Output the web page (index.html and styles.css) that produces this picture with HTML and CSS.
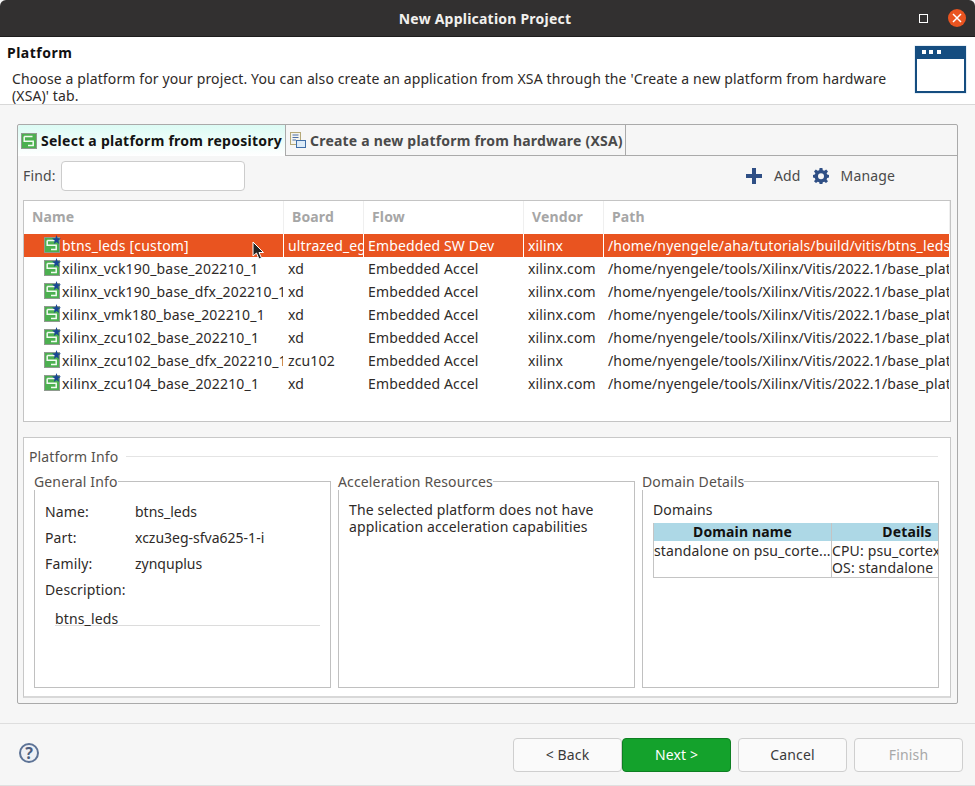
FILE: index.html
```html
<!DOCTYPE html>
<html lang="en">
<head>
<meta charset="utf-8">
<title>New Application Project</title>
<link rel="stylesheet" href="styles.css">
</head>
<body>
<svg class="defs" width="0" height="0" aria-hidden="true">
  <defs>
    <symbol id="repo" viewBox="0 0 16 16">
      <rect x="0.5" y="0.5" width="15" height="15" fill="#4cb050" stroke="#8f9a8f"/>
      <path d="M3.200 3.500H11.500M3.200 3.500V8.200H12.200V12.500H7" fill="none" stroke="#f2fbf2" stroke-width="1.500"/>
    </symbol>
    <symbol id="star" viewBox="0 0 8 8">
      <path d="M4 0L5 2.800L8 3L5.600 4.800L6.400 8L4 6.200L1.600 8L2.400 4.800L0 3L3 2.800Z" fill="#1a4596"/>
    </symbol>
  </defs>
</svg>
<div class="window">
  <header class="titlebar">
    <span class="title">New Application Project</span>
    <span class="maximize"></span>
    <span class="close">
      <svg width="10" height="10" viewBox="0 0 10 10"><path d="M1 1L9 9M9 1L1 9" stroke="#fff" stroke-width="1.500"/></svg>
    </span>
  </header>

  <section class="banner">
    <div class="banner-text">
      <h1>Platform</h1>
      <p>Choose a platform for your project. You can also create an application from XSA through the 'Create a new platform from hardware (XSA)' tab.</p>
    </div>
    <svg class="banner-icon" width="53" height="49" viewBox="0 0 53 49">
      <rect x="0.500" y="0.500" width="52" height="48" fill="#cfe0ee"/>
      <rect x="1" y="1" width="51" height="47" fill="#154d80"/>
      <rect x="3" y="14" width="47" height="32" fill="#fff"/>
      <rect x="8" y="5" width="4" height="4" fill="#fff"/>
      <rect x="15" y="5" width="4" height="4" fill="#fff"/>
      <rect x="23" y="5" width="4" height="4" fill="#fff"/>
    </svg>
  </section>

  <main class="content">
    <div class="folder">
      <div class="tabs">
        <div class="tab tab-active">
          <svg class="tab-icon" width="16" height="16"><use href="#repo"/></svg>
          <span>Select a platform from repository</span>
        </div>
        <div class="tab tab-idle">
          <svg class="tab-icon" width="16" height="16" viewBox="0 0 16 16">
            <rect x="0.500" y="0.500" width="10" height="12" fill="#f4f4ee" stroke="#b5a878"/>
            <path d="M2.500 3H8.500M2.500 5.500H8.500M2.500 8H6" stroke="#4d6fa8"/>
            <rect x="6.500" y="8.500" width="9" height="7" fill="#dcebf8" stroke="#3f6ea8"/>
          </svg>
          <span>Create a new platform from hardware (XSA)</span>
        </div>
        <div class="tab-rest"></div>
      </div>

      <div class="folder-body">
        <div class="toolbar">
          <label class="find-label" for="find">Find:</label>
          <input class="find-input" id="find" type="text">
          <div class="actions">
            <svg width="16" height="16" viewBox="0 0 16 16"><path d="M6 0H10V6H16V10H10V16H6V10H0V6H6Z" fill="#2f4f85"/></svg>
            <span class="action-label add-label">Add</span>
            <svg width="16" height="16" viewBox="0 0 16 16">
              <path fill="#2f4f85" fill-rule="evenodd" d="M6.600 0H9.400L9.800 2.200L11.300 2.800L13.200 1.500L15 3.400L13.600 5.200L14.200 6.600L16 7V9.600L14.200 10L13.600 11.400L15 13.200L13 15L11.300 13.700L9.800 14.200L9.400 16H6.600L6.200 14.200L4.700 13.700L3 15L1 13.200L2.400 11.400L1.800 10L0 9.600V7L1.800 6.600L2.400 5.200L1 3.400L2.800 1.500L4.700 2.800L6.200 2.200ZM8 5.200A3 3 0 1 0 8 11.200A3 3 0 1 0 8 5.200Z"/>
            </svg>
            <span class="action-label">Manage</span>
          </div>
        </div>

        <div class="table">
          <div class="row row-head">
            <div class="cell">Name</div><div class="cell">Board</div><div class="cell">Flow</div><div class="cell">Vendor</div><div class="cell">Path</div>
          </div>
          <div class="row row-selected">
            <div class="cell cell-name"><span class="ico"><svg class="ico-box" width="16" height="16"><use href="#repo"/></svg><svg class="ico-star" width="9" height="9"><use href="#star"/></svg></span><span>btns_leds [custom]</span></div>
            <div class="cell">ultrazed_eg</div><div class="cell">Embedded SW Dev</div><div class="cell">xilinx</div><div class="cell">/home/nyengele/aha/tutorials/build/vitis/btns_leds/export/btns_leds.xpfm</div>
          </div>
          <div class="row">
            <div class="cell cell-name"><span class="ico"><svg class="ico-box" width="16" height="16"><use href="#repo"/></svg><svg class="ico-star" width="9" height="9"><use href="#star"/></svg></span><span>xilinx_vck190_base_202210_1</span></div>
            <div class="cell">xd</div><div class="cell">Embedded Accel</div><div class="cell">xilinx.com</div><div class="cell">/home/nyengele/tools/Xilinx/Vitis/2022.1/base_platforms/xilinx</div>
          </div>
          <div class="row">
            <div class="cell cell-name"><span class="ico"><svg class="ico-box" width="16" height="16"><use href="#repo"/></svg><svg class="ico-star" width="9" height="9"><use href="#star"/></svg></span><span>xilinx_vck190_base_dfx_202210_1</span></div>
            <div class="cell">xd</div><div class="cell">Embedded Accel</div><div class="cell">xilinx.com</div><div class="cell">/home/nyengele/tools/Xilinx/Vitis/2022.1/base_platforms/xilinx</div>
          </div>
          <div class="row">
            <div class="cell cell-name"><span class="ico"><svg class="ico-box" width="16" height="16"><use href="#repo"/></svg><svg class="ico-star" width="9" height="9"><use href="#star"/></svg></span><span>xilinx_vmk180_base_202210_1</span></div>
            <div class="cell">xd</div><div class="cell">Embedded Accel</div><div class="cell">xilinx.com</div><div class="cell">/home/nyengele/tools/Xilinx/Vitis/2022.1/base_platforms/xilinx</div>
          </div>
          <div class="row">
            <div class="cell cell-name"><span class="ico"><svg class="ico-box" width="16" height="16"><use href="#repo"/></svg><svg class="ico-star" width="9" height="9"><use href="#star"/></svg></span><span>xilinx_zcu102_base_202210_1</span></div>
            <div class="cell">xd</div><div class="cell">Embedded Accel</div><div class="cell">xilinx.com</div><div class="cell">/home/nyengele/tools/Xilinx/Vitis/2022.1/base_platforms/xilinx</div>
          </div>
          <div class="row">
            <div class="cell cell-name"><span class="ico"><svg class="ico-box" width="16" height="16"><use href="#repo"/></svg><svg class="ico-star" width="9" height="9"><use href="#star"/></svg></span><span>xilinx_zcu102_base_dfx_202210_1</span></div>
            <div class="cell">zcu102</div><div class="cell">Embedded Accel</div><div class="cell">xilinx</div><div class="cell">/home/nyengele/tools/Xilinx/Vitis/2022.1/base_platforms/xilinx</div>
          </div>
          <div class="row">
            <div class="cell cell-name"><span class="ico"><svg class="ico-box" width="16" height="16"><use href="#repo"/></svg><svg class="ico-star" width="9" height="9"><use href="#star"/></svg></span><span>xilinx_zcu104_base_202210_1</span></div>
            <div class="cell">xd</div><div class="cell">Embedded Accel</div><div class="cell">xilinx.com</div><div class="cell">/home/nyengele/tools/Xilinx/Vitis/2022.1/base_platforms/xilinx</div>
          </div>
          <svg class="cursor" width="13" height="19" viewBox="0 0 13 19"><path d="M1 1V15L4.500 12L7 18L9.500 17L7 11.500H11.500Z" fill="#222" stroke="#fff" stroke-width="1"/></svg>
        </div>

        <div class="info">
          <div class="info-head"><span>Platform Info</span><span class="info-rule"></span></div>
          <div class="groups">
            <fieldset class="group">
              <legend>General Info</legend>
              <dl class="facts">
                <dt>Name:</dt><dd>btns_leds</dd>
                <dt>Part:</dt><dd>xczu3eg-sfva625-1-i</dd>
                <dt>Family:</dt><dd>zynquplus</dd>
                <dt>Description:</dt><dd></dd>
              </dl>
              <div class="desc">btns_leds</div>
            </fieldset>
            <fieldset class="group">
              <legend>Acceleration Resources</legend>
              <p class="accel">The selected platform does not have application acceleration capabilities</p>
            </fieldset>
            <fieldset class="group group-domain">
              <legend>Domain Details</legend>
              <div class="domains">Domains</div>
              <div class="dtable">
                <div class="dhead dname">Domain name</div>
                <div class="dhead ddetails">Details</div>
                <div class="dcell dname">standalone on psu_corte...</div>
                <div class="dcell ddetails">CPU: psu_cortexa53_0<br>OS: standalone</div>
              </div>
            </fieldset>
          </div>
        </div>
      </div>
    </div>
  </main>

  <footer class="footer">
    <span class="help">?</span>
    <div class="buttons">
      <button class="btn" type="button">&lt; Back</button>
      <button class="btn btn-primary" type="button">Next &gt;</button>
      <button class="btn btn-gap" type="button">Cancel</button>
      <button class="btn btn-gap btn-disabled" type="button">Finish</button>
    </div>
  </footer>
</div>
</body>
</html>
```

FILE: styles.css
```css
* { box-sizing: border-box; }
html, body { margin: 0; padding: 0; }
body {
  width: 975px;
  height: 786px;
  overflow: hidden;
  background: #f6f6f6;
  font-family: "Noto Sans", "Open Sans", sans-serif;
  font-size: 14px;
  letter-spacing: 0.14px;
  color: #2e2a28;
}
.defs { position: absolute; }
.window { display: flex; flex-direction: column; width: 975px; height: 786px; background: #f6f6f6; border-bottom: 1px solid #e0e0e0; }

.titlebar {
  flex: none;
  position: relative;
  height: 37px;
  display: flex;
  align-items: center;
  justify-content: center;
  background: #323030;
  border-bottom: 1px solid #1e1d1d;
  border-radius: 6px 6px 0 0;
}
.title { color: #f2f0ee; font-weight: 700; font-size: 14px; letter-spacing: 0.22px; margin-right: 5px; }
.maximize { position: absolute; left: 919px; top: 14px; width: 9px; height: 9px; border: 1px solid #fff; }
.close { position: absolute; left: 948px; top: 9px; width: 18px; height: 18px; border-radius: 50%; background: #e95420; display: flex; align-items: center; justify-content: center; }

.banner { flex: none; height: 68px; display: flex; background: #fff; border-bottom: 1px solid #d8d8d8; padding: 0 8px 0 0; }
.banner-text { flex: 1; min-width: 0; }
.banner h1 { margin: 7px 0 0 7px; font-size: 14px; line-height: 17px; font-weight: 700; letter-spacing: 0.5px; color: #111; }
.banner p { margin: 9px 0 0 12px; width: 890px; font-size: 14px; line-height: 17px; letter-spacing: 0.12px; color: #2e2a28; }
.banner-icon { flex: none; margin: 8px 0 0 0; }

.content { flex: none; height: 618px; padding: 19px 17px 0; }
.folder { width: 941px; height: 580px; border: 1px solid #aaa; border-radius: 2px; display: flex; flex-direction: column; }
.tabs { flex: none; height: 31px; display: flex; }
.tab { height: 31px; display: flex; align-items: center; font-weight: 700; font-size: 14px; letter-spacing: 0.26px; white-space: nowrap; }
.tab-active { width: 268px; padding-left: 3px; gap: 4px; color: #141414; background: linear-gradient(#dcfbf4, #fff); border-right: 1px solid #aaa; border-radius: 3px 0 0 0; }
.tab-idle { width: 340px; padding-left: 4px; gap: 4px; letter-spacing: 0.21px; color: #4a4a4a; border-right: 1px solid #aaa; border-bottom: 1px solid #aaa; }
.tab-rest { flex: 1; border-bottom: 1px solid #aaa; }
.tab-icon { flex: none; }

.folder-body { flex: 1; min-height: 0; padding: 0 6px 0 5px; display: flex; flex-direction: column; }
.toolbar { flex: none; height: 44px; display: flex; align-items: center; padding-bottom: 5px; }
.find-label { color: #4a4a4a; width: 38px; }
.find-input { width: 184px; height: 30px; background: #fff; border: 1px solid #ccc; border-radius: 4px; }
.actions { margin-left: auto; display: flex; align-items: center; padding-right: 56px; }
.action-label { color: #4a4a4a; margin-left: 12px; }
.add-label { margin-right: 12px; }

.table { position: relative; flex: none; height: 222px; background: #fff; border: 1px solid #c4c4c4; overflow: hidden; }
.row { display: grid; grid-template-columns: 260px 80px 160px 80px 1fr; height: 23px; align-items: stretch; }
.row-head { height: 33px; color: #a6a6a6; font-weight: 700; }
.row-head .cell { border-right: 1px solid #efefef; display: flex; align-items: center; padding: 0 0 1px 8px; }
.cell { overflow: hidden; white-space: nowrap; padding: 1px 0 0 4px; line-height: 22px; border-right: 1px solid transparent; }
.cell-name { display: flex; padding-left: 20px; gap: 2px; letter-spacing: 0.18px; }
.row-selected { background: #e95420; color: #fff; }
.row-selected .cell { border-right-color: #fff; }
.ico { position: relative; flex: none; width: 16px; height: 19px; }
.ico-box { position: absolute; left: 0; top: 2px; }
.ico-star { position: absolute; left: 8px; top: 0; }
.cursor { position: absolute; left: 228px; top: 40px; }

.info { flex: none; margin-top: 15px; height: 261px; background: #fff; padding: 10px 12px 0 5px; border: 1px solid #c8c8c8; border-bottom: 2px solid #d8d8d8; }
.info-head { display: flex; align-items: center; color: #55504c; height: 16px; gap: 8px; }
.info-rule { flex: 1; height: 1px; background: #e4e4e4; }
.groups { display: flex; gap: 7px; margin-top: 9px; padding-left: 5px; }
.group { flex: none; width: 297px; height: 215px; margin: 0; padding: 0; border: 1px solid #c0c0c0; min-width: 0; overflow: hidden; }
.group legend { padding: 0; margin-left: -1px; color: #55504c; font-size: 14px; line-height: 17px; }
.group-domain { padding-right: 0; }
.facts { display: grid; grid-template-columns: 90px 1fr; grid-auto-rows: 26px; margin: 8px 0 0 10px; align-items: center; }
.facts dt, .facts dd { margin: 0; color: #2e2a28; white-space: nowrap; }
.facts dd { letter-spacing: 0; }
.desc { margin: 7px 10px 0 20px; height: 17px; line-height: 19px; border-bottom: 1px solid #dcdcdc; }
.accel { margin: 11px 0 0 10px; width: 270px; line-height: 17px; }
.domains { margin: 11px 0 0 10px; line-height: 17px; }
.dtable { display: grid; grid-template-columns: 178px 150px; grid-template-rows: 18px 36px; margin: 5px 0 0 10px; width: 285px; overflow: hidden; border-left: 1px solid #c4c4c4; border-bottom: 1px solid #c4c4c4; }
.dhead { background: #add8e6; font-weight: 700; text-align: center; color: #111; line-height: 18px; border-right: 1px solid #c4c4c4; }
.dcell { padding-top: 1px; line-height: 17px; white-space: nowrap; overflow: hidden; border-right: 1px solid #c4c4c4; }
.ddetails { border-right: none; }

.footer { flex: 1; min-height: 0; display: flex; align-items: flex-start; padding: 14px 12px 0 19px; border-top: 1px solid #dedede; }
.help { flex: none; width: 20px; height: 20px; margin-top: 5px; border-radius: 50%; border: 2px solid #5d7396; background: #eef0f5; color: #4c5e7e; font-weight: 700; font-size: 16px; line-height: 16px; text-align: center; letter-spacing: 0; }
.buttons { margin-left: auto; display: flex; }
.btn { width: 109px; height: 34px; padding: 0 0 2px; background: #fafafa; border: 1px solid #cfcfcf; border-radius: 4px; font: inherit; letter-spacing: inherit; color: #3a3a3a; }
.btn-primary { background: #14a22c; border-color: #0e7f22; color: #fff; }
.btn-gap { margin-left: 7px; }
.btn-disabled { color: #a8a8a8; }
```
